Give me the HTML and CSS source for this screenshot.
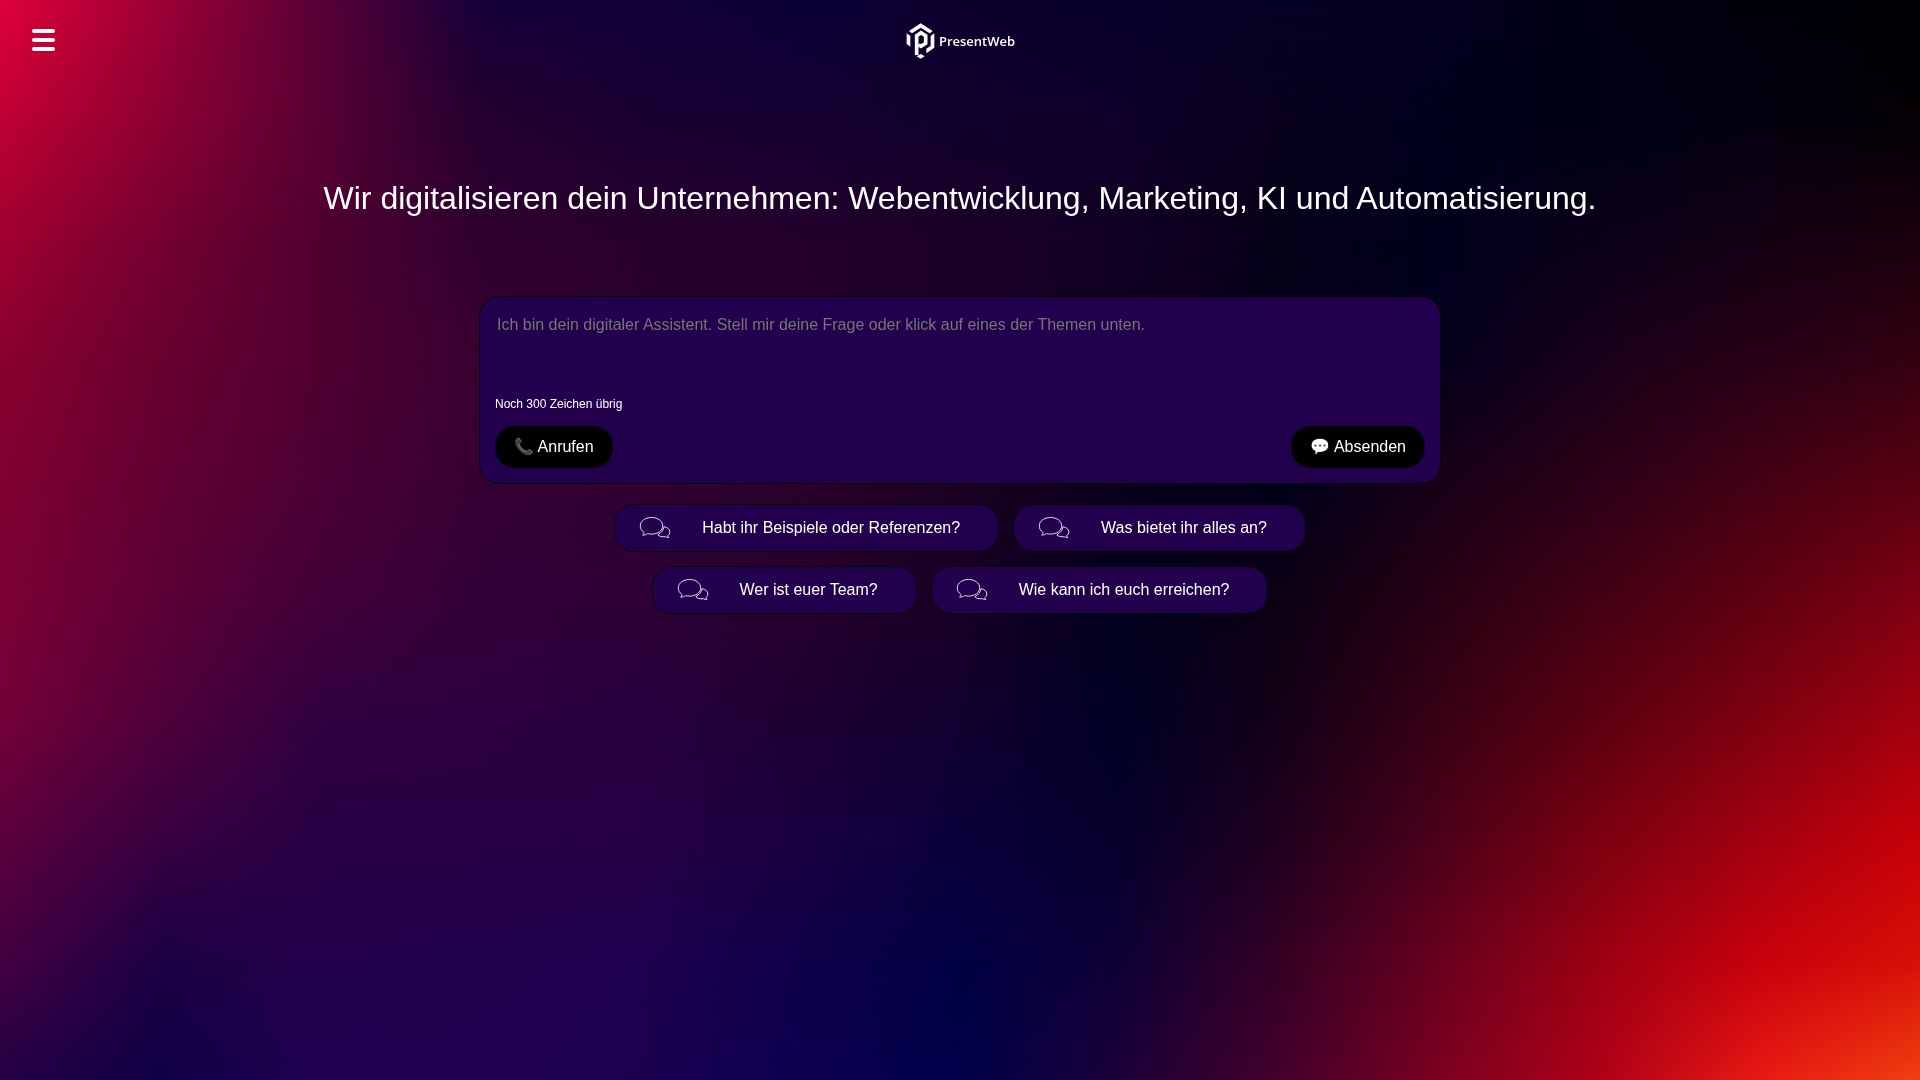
FILE: index.html
```html
<!DOCTYPE html>
<html lang="de">
<head>
  <meta charset="UTF-8">
  <meta name="viewport" content="width=device-width, initial-scale=1.0">
  <title>PresentWeb</title>
  <link rel="stylesheet" href="styles.css">
</head>
<body>
  <div class="backdrop" aria-hidden="true">
    <div class="band band-0"></div>
    <div class="band band-1"></div>
    <div class="band band-2"></div>
    <div class="band band-3"></div>
    <div class="band band-4"></div>
    <div class="band band-5"></div>
    <div class="band band-6"></div>
    <div class="band band-7"></div>
    <div class="band band-8"></div>
    <div class="band band-9"></div>
  </div>

  <header class="header">
    <button class="menu-btn" type="button" aria-label="Menü">
      <span></span>
      <span></span>
      <span></span>
    </button>
    <a class="logo" href="#">
      <svg class="logo-mark" viewBox="48 38 87 108" aria-hidden="true">
        <path fill="#fff" d="M57 62 92 39l36 23-9 7-27-17-26 17z"/>
        <path fill="#fff" d="M50 69l11 8v32l-11-8z"/>
        <path fill="#fff" d="M122 77l11-8v43l-24 17V115l13-8z"/>
        <path fill="none" stroke="#fff" stroke-width="11" d="M80 134V76l13-9 14 9v23l-14 9-7-5"/>
        <path fill="#fff" d="M92 131l12 7-12 7-12-7z"/>
      </svg>
      <span>PresentWeb</span>
    </a>
  </header>

  <main class="main">
    <h1>Wir digitalisieren dein Unternehmen: Webentwicklung, Marketing, KI und Automatisierung.</h1>

    <form class="chat-form">
      <textarea id="question" maxlength="300" aria-label="Deine Frage" placeholder="Ich bin dein digitaler Assistent. Stell mir deine Frage oder klick auf eines der Themen unten."></textarea>
      <label class="counter" for="question">Noch 300 Zeichen übrig</label>
      <div class="chat-actions">
        <button type="button">📞 Anrufen</button>
        <button type="submit">💬 Absenden</button>
      </div>
    </form>

    <svg class="sprite" aria-hidden="true">
      <symbol id="bubbles" viewBox="0 0 32 24">
        <path d="M5 16.500C2.500 14.700 1.300 12.500 1.300 9.800 1.300 5 6.200 1.500 12.500 1.500s11.200 3.500 11.200 8.300-5 8.300-11.200 8.300c-1.400 0-2.700-.2-3.900-.5-1.300 1.100-3 1.500-5 1.400C4.600 18.300 5 17.500 5 16.500z"/>
        <path d="M25 10.700c3.500.6 5.800 2.500 5.800 5.200 0 1.500-.7 2.700-1.800 3.600 0 .9.300 1.400.9 1.900-1.400.2-2.600-.1-3.600-.7-3.200.5-6-.3-7.500-2 3.300-1.600 5.600-4.500 6.200-8z"/>
      </symbol>
    </svg>

    <div class="topics">
      <div class="topic-row">
        <button class="topic" type="button"><svg><use href="#bubbles"/></svg>Habt ihr Beispiele oder Referenzen?</button>
        <button class="topic" type="button"><svg><use href="#bubbles"/></svg>Was bietet ihr alles an?</button>
      </div>
      <div class="topic-row">
        <button class="topic" type="button"><svg><use href="#bubbles"/></svg>Wer ist euer Team?</button>
        <button class="topic" type="button"><svg><use href="#bubbles"/></svg>Wie kann ich euch erreichen?</button>
      </div>
    </div>
  </main>
</body>
</html>
```

FILE: styles.css
```css
* { box-sizing: border-box; }
body { font-family: Arial, "Liberation Sans", sans-serif; margin: 0; min-height: 100vh; background: #12003a; color: #fff; }
button, textarea { font-family: inherit; font-size: 16px; color: #fff; }
button { cursor: pointer; }

/* Background: colour bands from top to bottom, each fading into the one before */
.backdrop { position: fixed; inset: 0; z-index: -1; overflow: hidden; }
.band { position: absolute; inset: 0; }
.band-0 { background: linear-gradient(90deg, #e0003a, #9c0036, #580036, #16003a, #12003a, #0a0038, #0c002c, #08002a, #060024, #040020, #000012, #00000c, #000004); }
.band-1 { background: linear-gradient(90deg, #c00034, #8c0032, #580034, #24002e, #1a0032, #160032, #10002c, #0e002a, #08001c, #00001c, #000014, #040010, #040004); mask-image: linear-gradient(transparent 0%, #000 11.11%); }
.band-2 { background: linear-gradient(90deg, #a00030, #740030, #500030, #300030, #28002c, #24002c, #1c0028, #120024, #060018, #00001c, #0a0018, #140014, #1a000c); mask-image: linear-gradient(transparent 11.11%, #000 22.22%); }
.band-3 { background: linear-gradient(90deg, #8a002e, #680030, #500030, #380030, #2c0030, #24002c, #1c0028, #10001e, #020018, #04001c, #1a001a, #280016, #340012); mask-image: linear-gradient(transparent 22.22%, #000 33.33%); }
.band-4 { background: linear-gradient(90deg, #800030, #620032, #4c0034, #360032, #300030, #2c002a, #1c0022, #0a001c, #00001a, #180018, #2c0018, #440014, #580010); mask-image: linear-gradient(transparent 33.33%, #000 44.44%); }
.band-5 { background: linear-gradient(90deg, #7c0034, #5c0036, #420038, #320038, #2e0036, #26002c, #180024, #02001c, #0c0014, #280014, #440014, #600010, #800012); mask-image: linear-gradient(transparent 44.44%, #000 55.55%); }
.band-6 { background: linear-gradient(90deg, #740038, #50003a, #300040, #2e0040, #280040, #1e0032, #120030, #000024, #140018, #380014, #5c0010, #800010, #a4000e); mask-image: linear-gradient(transparent 55.55%, #000 66.66%); }
.band-7 { background: linear-gradient(90deg, #5c003c, #380040, #280044, #280044, #260044, #1a0040, #0a003a, #06002c, #20001e, #4c001a, #7c0010, #a40010, #c80008); mask-image: linear-gradient(transparent 66.66%, #000 77.77%); }
.band-8 { background: linear-gradient(90deg, #440040, #1c0044, #24004c, #22004c, #1e0050, #10004a, #020044, #0e0036, #340024, #68001e, #9c0012, #c8000c, #d81008); mask-image: linear-gradient(transparent 77.77%, #000 88.88%); }
.band-9 { background: linear-gradient(90deg, #240044, #100048, #200050, #200050, #1c0052, #0c0050, #00004a, #1c0038, #44002c, #7c0020, #b00018, #e81a14, #f04010); mask-image: linear-gradient(transparent 88.88%, #000 100%); }

.header { display: grid; grid-template-columns: 1fr auto 1fr; align-items: center; height: 80px; padding: 0 32px; }
.menu-btn { display: flex; flex-direction: column; gap: 5px; justify-self: start; background: none; border: none; padding: 0; }
.menu-btn span { width: 23px; height: 4px; border-radius: 2px; background: #fff; }
.logo { display: flex; align-items: center; gap: 4px; padding: 2px 0 0 1px; color: #fff; font: 600 13px/20px "Open Sans", sans-serif; text-decoration: none; }
.logo-mark { width: 29px; height: 36px; }

.main { display: flex; flex-direction: column; align-items: center; padding: 100px 20px 40px; }
h1 { margin: 0 0 79px; font-size: 32px; line-height: 37px; font-weight: normal; text-align: center; }

.chat-form { width: 100%; max-width: 962px; padding: 15px; background: #22004d; border: 1px solid #000; border-radius: 20px; }
textarea { display: block; width: 100%; height: 70px; padding: 2px; line-height: 22px; background: none; border: none; outline: none; resize: none; }
textarea::placeholder { color: #757575; }
.counter { display: block; margin: 15px 0; font-size: 12px; line-height: 14px; }
.chat-actions { display: flex; justify-content: space-between; }
.chat-actions button { padding: 12px 19px; line-height: 18px; background: #000; border: none; border-radius: 20px; }

.sprite { display: none; }
.topics { display: flex; flex-direction: column; gap: 14px; margin-top: 20px; }
.topic-row { display: flex; flex-wrap: wrap; justify-content: center; gap: 14px; }
.topic { display: flex; align-items: center; gap: 31px; height: 48px; padding: 0 38px 0 24px; background: #22004d; border: 1px solid #000; border-radius: 20px; }
.topic svg { width: 32px; height: 24px; fill: none; stroke: #e4dcee; stroke-width: 1; }
```
